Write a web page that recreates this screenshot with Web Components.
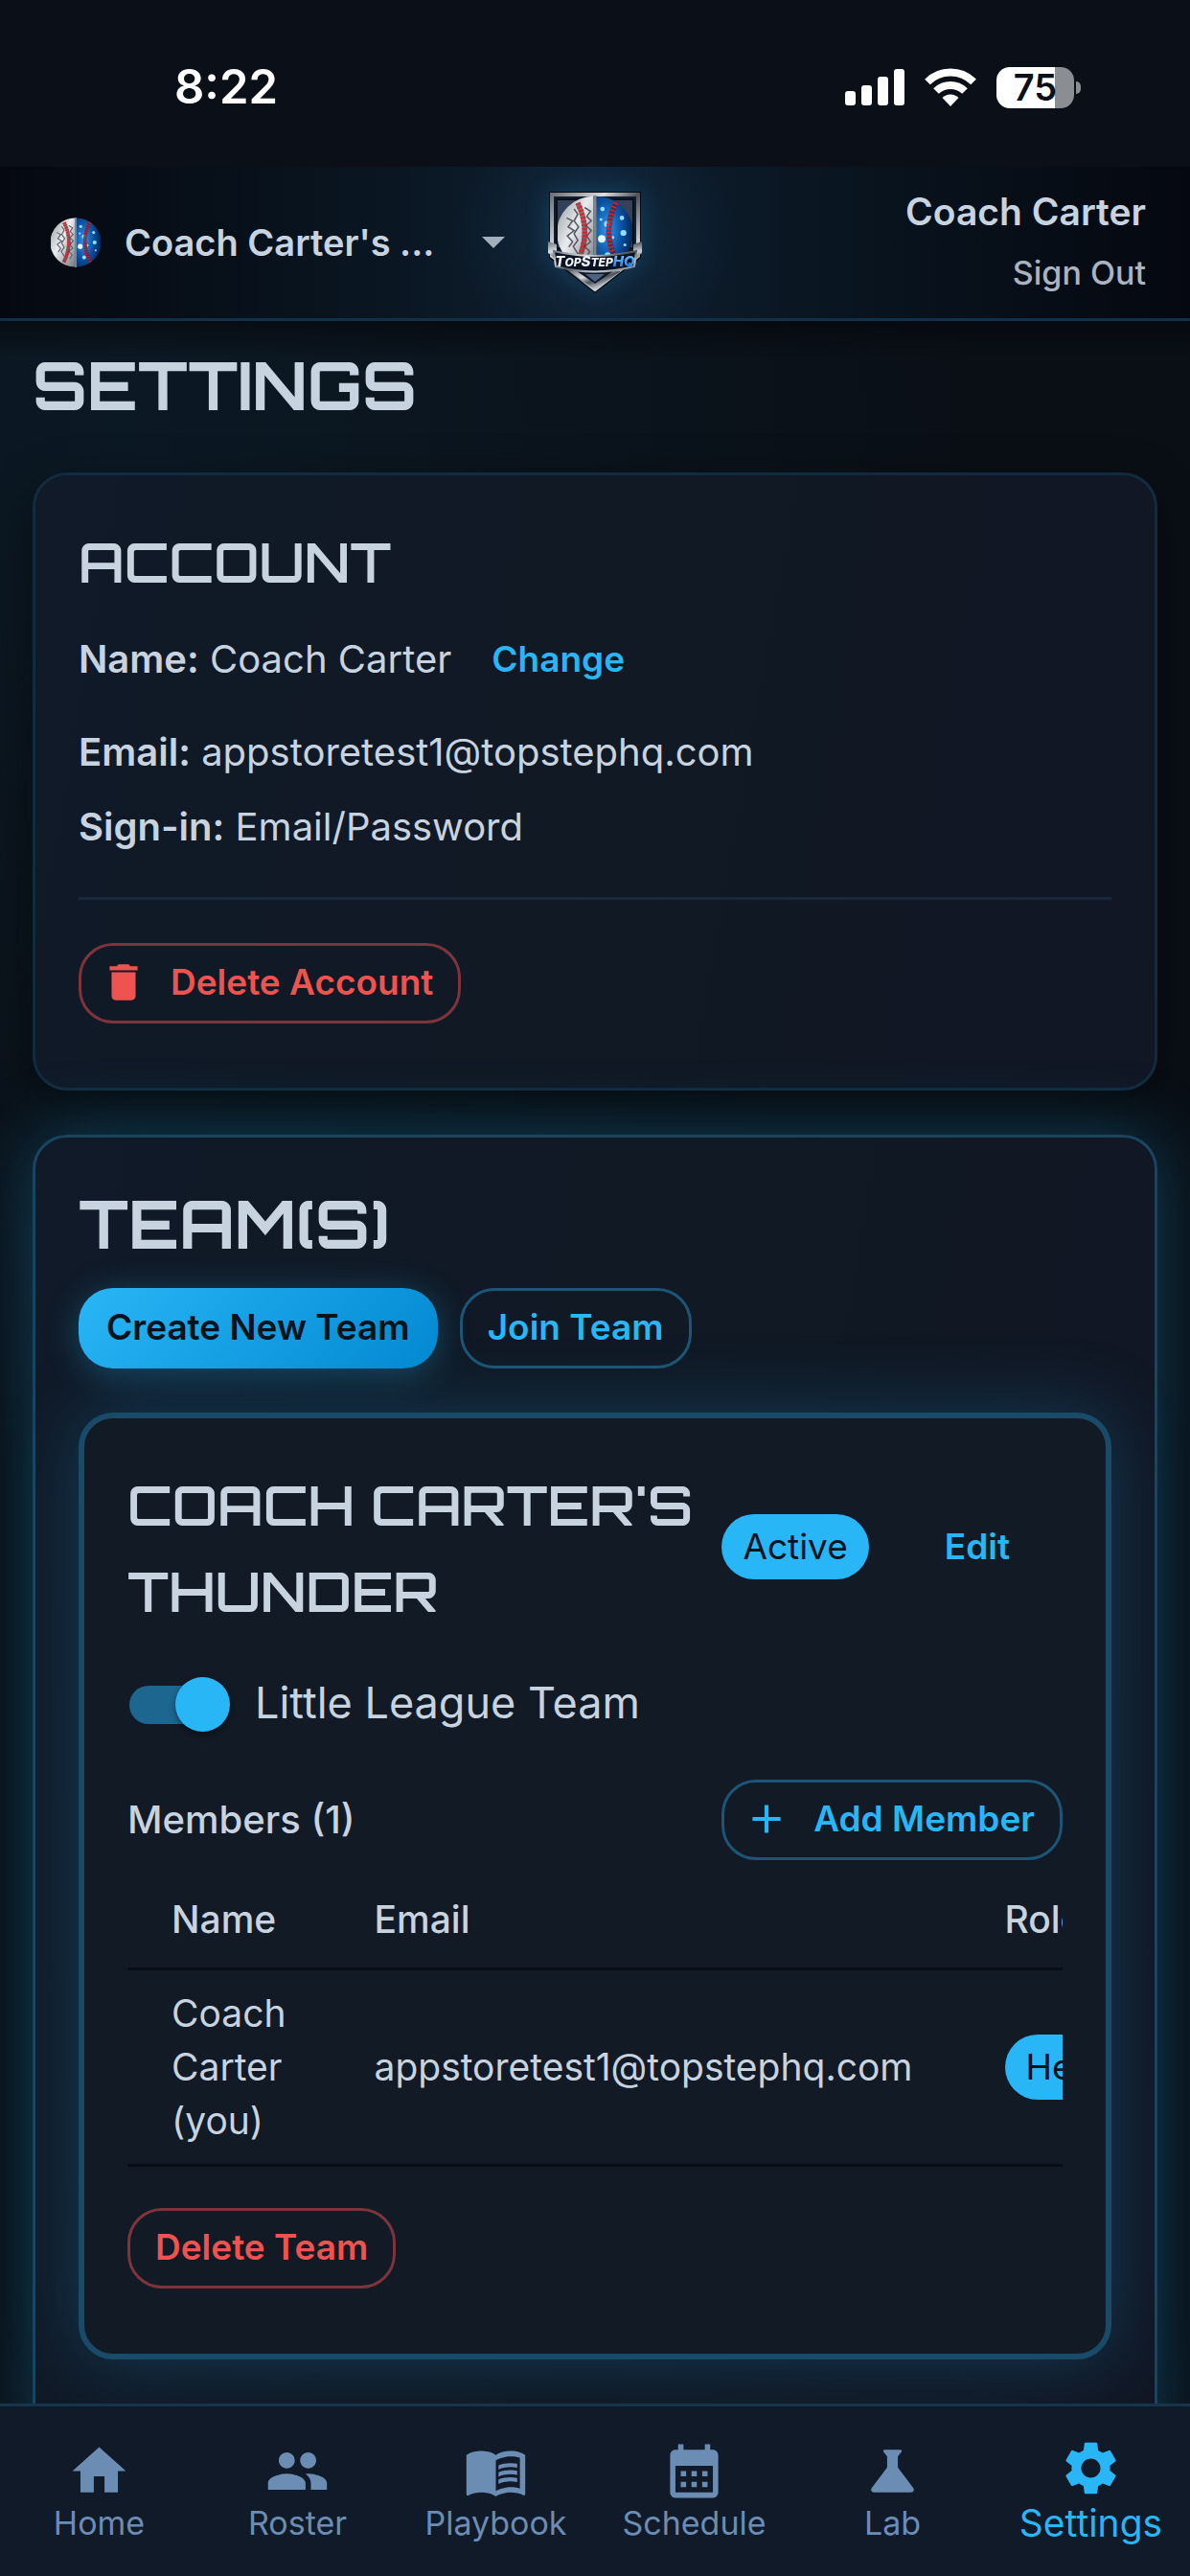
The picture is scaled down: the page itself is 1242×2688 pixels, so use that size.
<!DOCTYPE html>
<html lang="en">
<head>
<meta charset="utf-8">
<meta name="viewport" content="width=device-width, initial-scale=1">
<title>Settings</title>
<style>
  :root {
    --bg: #0a0f16;
    --text: #c8d3e0;
    --muted: #6b8cb3;
    --accent: #29b6f6;
    --danger: #ef5350;
    --line: #16344b;
    --display: "Orbitron", "DejaVu Sans", sans-serif;
  }
  body {
    margin: 0;
    background: var(--bg);
    color: var(--text);
    font: 400 40px/56px "Inter", "Liberation Sans", sans-serif;
  }
</style>
</head>
<body>
<app-shell>
  <status-bar slot="top"></status-bar>
  <app-header slot="top"></app-header>

  <page-title>SETTINGS</page-title>

  <settings-card>
    <card-title size="small">ACCOUNT</card-title>
    <account-info></account-info>
  </settings-card>

  <settings-card glow>
    <card-title>TEAM(S)</card-title>
    <button-row>
      <action-button kind="filled">Create New Team</action-button>
      <action-button>Join Team</action-button>
    </button-row>
    <team-card></team-card>
  </settings-card>

  <bottom-nav slot="bottom">
    <nav-tab icon="home">Home</nav-tab>
    <nav-tab icon="people">Roster</nav-tab>
    <nav-tab icon="book">Playbook</nav-tab>
    <nav-tab icon="calendar">Schedule</nav-tab>
    <nav-tab icon="flask">Lab</nav-tab>
    <nav-tab icon="gear" selected>Settings</nav-tab>
  </bottom-nav>
</app-shell>

<script>
const icons = {
  home: "M10 20v-6h4v6h5v-8h3L12 3 2 12h3v8z",
  people: "M16 11c1.66 0 2.99-1.34 2.99-3S17.66 5 16 5s-3 1.34-3 3 1.34 3 3 3m-8 0c1.66 0 2.99-1.34 2.99-3S9.66 5 8 5 5 6.34 5 8s1.34 3 3 3m0 2c-2.33 0-7 1.17-7 3.5V19h14v-2.5c0-2.33-4.67-3.5-7-3.5m8 0c-.29 0-.62.02-.97.05 1.16.84 1.97 1.97 1.97 3.45V19h6v-2.5c0-2.33-4.67-3.5-7-3.5",
  book: "M21 5c-1.11-.35-2.33-.5-3.5-.5-1.95 0-4.05.4-5.5 1.5-1.45-1.1-3.55-1.5-5.5-1.5S2.45 4.9 1 6v14.65c0 .25.25.5.5.5.1 0 .15-.05.25-.05C3.1 20.45 5.05 20 6.5 20c1.95 0 4.05.4 5.5 1.5 1.35-.85 3.8-1.5 5.5-1.5 1.65 0 3.35.3 4.75 1.05.1.05.15.05.25.05.25 0 .5-.25.5-.5V6c-.6-.45-1.25-.75-2-1m0 13.5c-1.1-.35-2.3-.5-3.5-.5-1.7 0-4.15.65-5.5 1.5V8c1.35-.85 3.8-1.5 5.5-1.5 1.2 0 2.4.15 3.5.5z M17.5 10.5c.88 0 1.73.09 2.5.26V9.24c-.79-.15-1.64-.24-2.5-.24-1.7 0-3.24.29-4.5.83v1.66c1.13-.64 2.7-.99 4.5-.99M13 12.49v1.66c1.13-.64 2.7-.99 4.5-.99.88 0 1.73.09 2.5.26V11.9c-.79-.15-1.64-.24-2.5-.24-1.7 0-3.24.3-4.5.83m4.5 1.84c-1.7 0-3.24.29-4.5.83v1.66c1.13-.64 2.7-.99 4.5-.99.88 0 1.73.09 2.5.26v-1.52c-.79-.16-1.64-.24-2.5-.24",
  calendar: "M19 4h-1V2h-2v2H8V2H6v2H5c-1.11 0-1.99.9-1.99 2L3 20c0 1.1.89 2 2 2h14c1.1 0 2-.9 2-2V6c0-1.1-.9-2-2-2m0 16H5V10h14zM9 14H7v-2h2zm4 0h-2v-2h2zm4 0h-2v-2h2zm-8 4H7v-2h2zm4 0h-2v-2h2zm4 0h-2v-2h2z",
  flask: "M19.8 18.4 14 10.67V6.5l1.35-1.69c.26-.33.03-.81-.39-.81H9.04c-.42 0-.65.48-.39.81L10 6.5v4.17L4.2 18.4c-.49.66-.02 1.6.8 1.6h14c.82 0 1.29-.94.8-1.6",
  gear: "M19.14 12.94c.04-.3.06-.61.06-.94 0-.32-.02-.64-.07-.94l2.03-1.58c.18-.14.23-.41.12-.61l-1.92-3.32c-.12-.22-.37-.29-.59-.22l-2.39.96c-.5-.38-1.03-.7-1.62-.94l-.36-2.54c-.04-.24-.24-.41-.48-.41h-3.84c-.24 0-.43.17-.47.41l-.36 2.54c-.59.24-1.13.57-1.62.94l-2.39-.96c-.22-.08-.47 0-.59.22L2.74 8.87c-.12.21-.08.47.12.61l2.03 1.58c-.05.3-.09.63-.09.94s.02.64.07.94l-2.03 1.58c-.18.14-.23.41-.12.61l1.92 3.32c.12.22.37.29.59.22l2.39-.96c.5.38 1.03.7 1.62.94l.36 2.54c.05.24.24.41.48.41h3.84c.24 0 .44-.17.47-.41l.36-2.54c.59-.24 1.13-.56 1.62-.94l2.39.96c.22.08.47 0 .59-.22l1.92-3.32c.12-.22.07-.47-.12-.61zM12 15.6c-1.98 0-3.6-1.62-3.6-3.6s1.62-3.6 3.6-3.6 3.6 1.62 3.6 3.6-1.62 3.6-3.6 3.6",
  trash: "M6 19c0 1.1.9 2 2 2h8c1.1 0 2-.9 2-2V7H6zM19 4h-3.5l-1-1h-5l-1 1H5v2h14z",
  plus: "M19 13h-6v6h-2v-6H5v-2h6V5h2v6h6z",
};

// two-sided baseball, drawn on a 100 x 100 box
const ball = `
  <defs>
    <linearGradient id="leather" x1="0" y1="0" x2="1" y2="1">
      <stop offset="0" stop-color="#8f959c"/><stop offset=".45" stop-color="#e9ebed"/><stop offset="1" stop-color="#767c84"/>
    </linearGradient>
    <radialGradient id="night" cx=".3" cy=".45" r=".8">
      <stop offset="0" stop-color="#2b9bf0"/><stop offset=".5" stop-color="#0b4fa0"/><stop offset="1" stop-color="#04183d"/>
    </radialGradient>
  </defs>
  <path d="M48 1A49 49 0 0 0 48 99z" fill="url(#leather)"/>
  <path d="M52 1A49 49 0 0 1 52 99z" fill="url(#night)"/>
  <path d="M36 16l8 5-5 7 6 6-7 6 7 7-6 7 5 8-8 6 7 7-5 8M12 30l8 4-6 8 8 5-9 7 7 8-5 7M22 18l5 7-5 9 6 8-6 9 5 9-6 8 6 10" fill="none" stroke="#565c64" stroke-width="2"/>
  <g fill="#8fe0ff">
    <circle cx="60" cy="18" r="3"/><circle cx="66" cy="38" r="4"/><circle cx="59" cy="58" r="5" fill="#e4f8ff"/>
    <circle cx="67" cy="80" r="4"/><circle cx="88" cy="50" r="4"/><circle cx="86" cy="30" r="3"/>
    <circle cx="90" cy="66" r="2"/><circle cx="74" cy="56" r="2"/><circle cx="58" cy="32" r="2"/>
  </g>
  <path d="M27 10Q46 50 26 90M78 10Q58 50 80 90" fill="none" stroke="#5e1017" stroke-width="7" opacity=".6"/>
  <path d="M27 10Q46 50 26 90M78 10Q58 50 80 90" fill="none" stroke="#e01f26" stroke-width="7" stroke-dasharray="2 3"/>
  <path d="M50 0V100" stroke="#7d848d" stroke-width="4"/>`;

function icon(name) {
  return `<svg viewBox="0 0 24 24" aria-hidden="true"><path fill="currentColor" fill-rule="evenodd" d="${icons[name]}"/></svg>`;
}

// registers an element whose shadow root is cloned from the given markup
function define(tag, markup) {
  const template = document.createElement("template");
  template.innerHTML = markup;
  window.customElements.define(
    tag,
    class extends HTMLElement {
      constructor() {
        super()
          .attachShadow({ mode: "open" })
          .appendChild(template.content.cloneNode(true));
      }
    }
  );
}

define("app-shell", `
  <style>
    :host {
      display: flex;
      flex-direction: column;
      height: 100vh;
    }
    main {
      flex: 1;
      min-height: 0;
      overflow: hidden;
      display: flex;
      flex-direction: column;
      gap: 46px;
      padding: 22px 34px 0;
      background:
        linear-gradient(180deg, rgba(5, 8, 13, 0.7), transparent 40px),
        radial-gradient(900px 1100px at 10% 5%, #0b1924, transparent),
        var(--bg);
    }
    ::slotted(*) { flex: none; }
  </style>
  <slot name="top"></slot>
  <main><slot></slot></main>
  <slot name="bottom"></slot>
`);

define("status-bar", `
  <style>
    :host {
      display: flex;
      align-items: center;
      justify-content: space-between;
      height: 174px;
      padding: 8px 114px 0 182px;
      box-sizing: border-box;
      background: #0a0f18;
      color: #fff;
    }
    time { font-size: 49px; font-weight: 600; }
    .icons { display: flex; align-items: center; gap: 20px; }
    svg { display: block; }
    .battery { display: flex; align-items: center; gap: 2px; }
    .level {
      width: 81px;
      height: 43px;
      border-radius: 14px;
      background: linear-gradient(90deg, #fff 61px, #8a8d92 61px);
      color: #0a0f18;
      font-size: 38px;
      font-weight: 600;
      line-height: 43px;
      text-align: center;
    }
    .nub { width: 5px; height: 13px; border-radius: 0 6px 6px 0; background: #8a8d92; }
  </style>
  <time>8:22</time>
  <div class="icons">
    <svg width="62" height="40" viewBox="0 0 62 40" fill="#fff" aria-hidden="true">
      <rect y="24" width="11" height="15" rx="3"/><rect x="17" y="18" width="11" height="21" rx="3"/>
      <rect x="34" y="9" width="11" height="30" rx="3"/><rect x="51" y="1" width="11" height="38" rx="3"/>
    </svg>
    <svg width="56" height="42" viewBox="0 0 56 42" aria-hidden="true">
      <g fill="none" stroke="#fff" stroke-width="8">
        <path d="M4 15.500a34 34 0 0 1 48 0"/><path d="M13 25a21.500 21.500 0 0 1 30 0"/>
      </g>
      <path d="M28 41l-8.500-9a12 12 0 0 1 17 0z" fill="#fff"/>
    </svg>
    <div class="battery"><div class="level">75</div><div class="nub"></div></div>
  </div>
`);

define("app-header", `
  <style>
    :host {
      display: grid;
      grid-template-columns: 1fr auto 1fr;
      align-items: center;
      height: 161px;
      padding: 0 46px;
      box-sizing: border-box;
      border-bottom: 3px solid #123148;
      background:
        radial-gradient(150px 120px at 50% 45%, rgba(30, 110, 160, 0.18), transparent),
        linear-gradient(90deg, #050810, #091520 30%, #0f1e30 50%, #091520 70%, #050810);
      font-weight: 600;
    }
    .team { display: flex; align-items: center; gap: 25px; padding-left: 7px; }
    .ball { width: 52px; height: 52px; }
    select {
      appearance: none;
      width: 348px;
      padding: 0;
      border: 0;
      background: none;
      color: var(--text);
      font: inherit;
      font-size: 38px;
    }
    .caret { width: 24px; height: 12px; }
    .user { display: flex; flex-direction: column; align-items: flex-end; font-size: 39px; line-height: 64px; }
    .user a { color: #a9b4c0; font-size: 34px; font-weight: 500; text-decoration: none; }
    .logo { display: block; width: 100px; height: 108px; filter: drop-shadow(0 0 12px rgba(41, 182, 246, 0.18)); }
  </style>
  <div class="team">
    <svg class="ball" viewBox="0 0 100 100" aria-hidden="true">${ball}</svg>
    <select aria-label="Team"><option>Coach Carter's ...</option></select>
    <svg class="caret" viewBox="0 0 24 12" aria-hidden="true"><path d="M0 0h24L12 12z" fill="#a3afbb"/></svg>
  </div>
  <svg class="logo" viewBox="0 0 100 108" role="img" aria-label="TopStepHQ">
    <defs>
      <linearGradient id="steel" x1="0" y1="0" x2="1" y2="1">
        <stop offset="0" stop-color="#6d747d"/><stop offset=".3" stop-color="#d9dde2"/>
        <stop offset=".5" stop-color="#4c535c"/><stop offset=".75" stop-color="#c9ced4"/><stop offset="1" stop-color="#4b525b"/>
      </linearGradient>
      <linearGradient id="hq" x1="0" y1="0" x2="0" y2="1">
        <stop offset="0" stop-color="#7fd0ff"/><stop offset="1" stop-color="#0a6ff0"/>
      </linearGradient>
    </defs>
    <path d="M2 1H98V70L50 107 2 70z" fill="#05080e"/>
    <path d="M5 4H95V68L50 103 5 68z" fill="#131c2c" stroke="url(#steel)" stroke-width="4"/>
    <path d="M10 9H90V60H10z" fill="#33415a" stroke="#0a0f18" stroke-width="2"/>
    <svg x="11" y="5" width="78" height="78" viewBox="0 0 100 100">${ball}</svg>
    <path d="M24 80Q50 90 76 80L50 101z" fill="#10192a"/>
    <path d="M23 84L50 103 77 84 69 84 50 97 31 84z" fill="url(#steel)"/>
    <path d="M40 87H60L50 95z" fill="#4e6384"/>
    <path d="M1 53L10 56V72L1 65zM99 53L90 56V72L99 65z" fill="url(#steel)"/>
    <path d="M7 63Q50 73 93 63L91 79Q50 90 9 79z" fill="#0a1322" stroke="url(#steel)" stroke-width="2"/>
    <text x="50" y="79" text-anchor="middle" font-family="Inter, sans-serif" font-size="15" font-weight="800" font-style="italic" fill="#eef2f6">T<tspan font-size="12">OP</tspan>S<tspan font-size="12">TEP</tspan><tspan fill="url(#hq)">HQ</tspan></text>
  </svg>
  <div class="user"><span>Coach Carter</span><a href="#">Sign Out</a></div>
`);

define("page-title", `
  <style>
    :host { display: block; }
    h1 { margin: 0; font: 700 69px/90px var(--display); }
  </style>
  <h1><slot></slot></h1>
`);

define("card-title", `
  <style>
    :host { display: block; }
    h2 { margin: 0; font: 700 69px/84px var(--display); }
    :host([size="small"]) h2 { font-size: 57px; font-weight: 600; }
  </style>
  <h2><slot></slot></h2>
`);

define("settings-card", `
  <style>
    :host {
      display: block;
      padding: 48px 45px 67px;
      border: 3px solid #132b3e;
      border-radius: 36px;
      background: linear-gradient(100deg, #101a28, #101924 45%, #111724);
      box-shadow: 0 12px 48px rgba(0, 0, 0, 0.4);
    }
    :host([glow]) {
      padding-bottom: 112px;
      border-color: #194561;
      box-shadow: 0 0 72px rgba(24, 130, 175, 0.42);
    }
  </style>
  <slot></slot>
`);

define("button-row", `
  <style>
    :host { display: flex; gap: 23px; margin: 25px 0 46px; }
  </style>
  <slot></slot>
`);

define("action-button", `
  <style>
    :host { display: inline-block; }
    button {
      display: flex;
      align-items: center;
      gap: 24px;
      height: 84px;
      padding: 0 26px 2px;
      border: 3px solid #1c5577;
      border-radius: 36px;
      background: none;
      color: var(--accent);
      font: inherit;
      font-size: 37px;
      font-weight: 600;
      white-space: nowrap;
    }
    ::slotted(svg) { width: 50px; height: 50px; margin-left: -7px; }
    :host([kind="filled"]) button {
      border: 0;
      padding: 0 29px 2px;
      background: linear-gradient(135deg, #29b6f6, #0288d1);
      box-shadow: 0 6px 36px rgba(41, 182, 246, 0.3);
      color: #06121c;
    }
    :host([kind="danger"]) button { border-color: #7d343b; color: var(--danger); }
    :host([kind="text"]) button { border-color: transparent; padding: 0 15px; }
  </style>
  <button type="button"><slot name="icon"></slot><slot></slot></button>
`);

define("account-info", `
  <style>
    :host { display: block; }
    .name { display: flex; align-items: center; gap: 24px; margin: 18px 0 27px; }
    p { margin: 0 0 22px; }
    b { font-weight: 600; }
    hr { margin: 45px 0; border: 0; border-top: 3px solid #16293f; }
    action-button { display: block; }
  </style>
  <div class="name">
    <span><b>Name:</b> Coach Carter</span>
    <action-button kind="text">Change</action-button>
  </div>
  <p><b>Email:</b> appstoretest1@topstephq.com</p>
  <p><b>Sign-in:</b> Email/Password</p>
  <hr>
  <action-button kind="danger"><svg slot="icon" viewBox="0 0 24 24" aria-hidden="true"><path fill="currentColor" d="${icons.trash}"/></svg>Delete Account</action-button>
`);

define("status-chip", `
  <style>
    :host {
      display: inline-block;
      padding: 0 22px;
      border-radius: 34px;
      background: var(--accent);
      color: #06121c;
      font-size: 37px;
      line-height: 68px;
      white-space: nowrap;
    }
  </style>
  <slot></slot>
`);

define("toggle-switch", `
  <style>
    :host { display: block; }
    label { display: flex; align-items: center; gap: 26px; height: 114px; font-size: 45px; }
    input {
      appearance: none;
      display: flex;
      align-items: center;
      justify-content: flex-end;
      width: 102px;
      height: 40px;
      margin: 3px 3px 0 2px;
      border-radius: 20px;
      background: #1d6690;
    }
    input::before {
      content: "";
      width: 57px;
      height: 57px;
      margin-right: -3px;
      border-radius: 50%;
      background: var(--accent);
      box-shadow: 0 3px 6px rgba(0, 0, 0, 0.4);
    }
  </style>
  <label><input type="checkbox" role="switch" checked><slot></slot></label>
`);

define("members-table", `
  <style>
    :host { display: block; overflow: hidden; font-size: 39px; }
    table { border-collapse: separate; border-spacing: 0; width: 100%; }
    th, td { padding: 17px 46px; border-bottom: 3px solid #080e15; text-align: left; }
    th { padding: 22px 46px; font-weight: 500; }
    td { font-weight: 400; }
    .email { padding-right: 50px; }
  </style>
  <table>
    <thead>
      <tr><th>Name</th><th>Email</th><th>Role</th></tr>
    </thead>
    <tbody>
      <tr><td>Coach Carter (you)</td><td class="email">appstoretest1@topstephq.com</td><td><status-chip>Head Coach</status-chip></td></tr>
    </tbody>
  </table>
`);

define("team-card", `
  <style>
    :host {
      display: block;
      padding: 45px 45px 68px;
      border: 6px solid #194a68;
      border-radius: 36px;
      background: #111a25;
      box-shadow: 0 0 72px rgba(24, 110, 160, 0.4);
    }
    header { display: flex; align-items: center; gap: 20px; }
    h3 { flex: 1; margin: 0; font: 600 57px/90px var(--display); }
    .side { display: flex; align-items: center; gap: 61px; padding: 0 37px 3px 0; }
    .toggle { margin: 15px 0 23px; }
    .members { display: flex; align-items: center; justify-content: space-between; font-weight: 500; }
    members-table { margin: 12px 0 43px; }
  </style>
  <header>
    <h3>COACH CARTER'S THUNDER</h3>
    <div class="side">
      <status-chip>Active</status-chip>
      <action-button kind="text">Edit</action-button>
    </div>
  </header>
  <toggle-switch class="toggle">Little League Team</toggle-switch>
  <div class="members">
    <span>Members (1)</span>
    <action-button><svg slot="icon" viewBox="0 0 24 24" aria-hidden="true"><path fill="currentColor" d="${icons.plus}"/></svg>Add Member</action-button>
  </div>
  <members-table></members-table>
  <action-button kind="danger">Delete Team</action-button>
`);

define("bottom-nav", `
  <style>
    :host { display: block; border-top: 3px solid var(--line); background: #111a28; }
    nav { display: grid; grid-template-columns: repeat(6, 1fr); height: 177px; }
  </style>
  <nav><slot></slot></nav>
`);

window.customElements.define(
  "nav-tab",
  class extends HTMLElement {
    constructor() {
      super();
      this.attachShadow({ mode: "open" });
    }

    connectedCallback() {
      this.shadowRoot.innerHTML = `
        <style>
          :host { display: block; }
          a {
            display: flex;
            flex-direction: column;
            align-items: center;
            padding-top: 34px;
            color: var(--muted);
            font-size: 34px;
            line-height: 42px;
            text-decoration: none;
          }
          svg { width: 67px; height: 67px; }
          :host([selected]) a { padding-top: 31px; color: var(--accent); font-size: 39px; line-height: 48px; }
        </style>
        <a href="#">${icon(this.getAttribute("icon"))}<slot></slot></a>
      `;
    }
  }
);
</script>
</body>
</html>
